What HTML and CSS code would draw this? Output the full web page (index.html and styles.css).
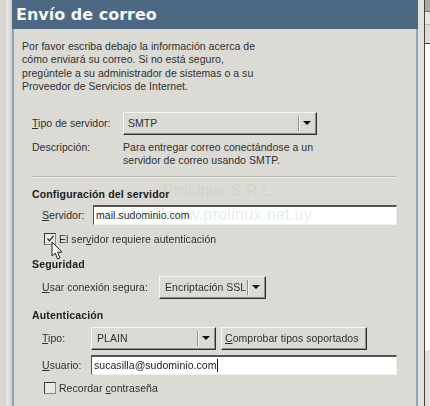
FILE: index.html
```html
<!DOCTYPE html>
<html lang="es">
<head>
<meta charset="utf-8">
<title>Envío de correo</title>
<link rel="stylesheet" href="styles.css">
</head>
<body>
<div class="window">
  <div class="frame">
    <main class="panel">
      <h1 class="title">Envío de correo</h1>
      <div class="content">
        <p class="intro">Por favor escriba debajo la información acerca de<br>cómo enviará su correo. Si no está seguro,<br>pregúntele a su administrador de sistemas o a su<br>Proveedor de Servicios de Internet.</p>
        <div class="row row-type">
          <span class="label label-wide"><u>T</u>ipo de servidor:</span>
          <div class="combo combo-smtp"><span class="combo-text">SMTP</span><span class="combo-sep"></span><span class="arrow"></span></div>
        </div>
        <div class="row row-desc">
          <span class="label label-wide">Descripción:</span>
          <p class="desc">Para entregar correo conectándose a un<br>servidor de correo usando SMTP.</p>
        </div>
        <div class="rule"></div>
        <h2 class="heading heading-first">Configuración del servidor</h2>
        <div class="row row-server">
          <span class="label label-server"><u>S</u>ervidor:</span>
          <div class="field field-server">mail.sudominio.com</div>
        </div>
        <div class="check check-auth"><span class="box"><svg width="9" height="9" viewBox="0 0 9 9"><path d="M1.5 4.5L3.5 6.8L7.5 1.8" fill="none" stroke="#222" stroke-width="1.2"/></svg></span><span>El ser<u>v</u>idor requiere autenticación</span></div>
        <h2 class="heading heading-sec">Seguridad</h2>
        <div class="row row-secure">
          <span class="label label-secure"><u>U</u>sar conexión segura:</span>
          <div class="combo combo-ssl"><span class="combo-text">Encriptación SSL</span><span class="combo-sep"></span><span class="arrow"></span></div>
        </div>
        <h2 class="heading heading-auth">Autenticación</h2>
        <div class="row row-auth">
          <span class="label label-auth"><u>T</u>ipo:</span>
          <div class="combo combo-plain"><span class="combo-text">PLAIN</span><span class="combo-sep"></span><span class="arrow"></span></div>
          <div class="button"><span><u>C</u>omprobar tipos soportados</span></div>
        </div>
        <div class="row row-user">
          <span class="label label-auth"><u>U</u>suario:</span>
          <div class="field field-user">sucasilla@sudominio.com<span class="caret"></span></div>
        </div>
        <div class="check check-remember"><span class="box"></span><span>Recordar <u>c</u>ontraseña</span></div>
      </div>
    </main>
  </div>
  <aside class="side">
    <div class="side-a"></div>
    <div class="side-b"></div>
    <div class="side-c"></div>
    <div class="side-gap"></div>
    <div class="side-d"></div>
  </aside>
</div>
<div class="mark mark-1">ProLinux S.R.L.</div>
<div class="mark mark-2">http://www.prolinux.net.uy</div>
<svg class="cursor" width="13" height="20" viewBox="0 0 13 20"><path d="M1 1V15L4.2 12L6.6 18L9 17L6.6 11.2H11Z" fill="#fff" stroke="#222" stroke-width="1"/></svg>
</body>
</html>
```
FILE: styles.css
```css
* { box-sizing: border-box; }
html, body { margin: 0; height: 100%; }
body {
  width: 430px;
  height: 406px;
  overflow: hidden;
  position: relative;
  background: #d9d7d1;
  font-family: "Liberation Sans", Arial, sans-serif;
  font-size: 10.5px;
  color: #2f2f2f;
  letter-spacing: 0.04px;
  filter: blur(0.3px);
}
u { text-decoration-thickness: 1px; text-underline-offset: 1px; }
.window { display: flex; height: 406px; }
.frame {
  width: 425px;
  height: 406px;
  padding: 0 6px 0 12px;
  border-right: 1px solid #444;
  background: linear-gradient(90deg, #d8d6d0 0, #d8d6d0 6px, #ecebe7 7px, #d4d2cc 11px, #d4d2cc 12px) left top / 12px 100% no-repeat, #e2e0dc;
}
.panel {
  height: 406px;
  background: #dbdad5;
  border-left: 2px solid #8fa3b6;
  border-right: 2px solid #8fa3b6;
}
.title {
  margin: 0 -2px;
  height: 29px;
  padding: 3px 0 0 4px;
  background: #4d6883;
  color: #f4f6f7;
  font-family: "DejaVu Sans", sans-serif;
  font-size: 16px;
  line-height: 23px;
  font-weight: 700;
  letter-spacing: 0;
}
.content { padding: 11px 20px 0 8px; }
.intro { margin: 0; line-height: 13.4px; }
.row { display: flex; align-items: center; }
.label { flex: none; }
.label-wide { width: 91px; }
.row-type { margin: 18px 0 0 10px; height: 23px; }
.row-desc { margin: 6px 0 0 10px; align-items: flex-start; }
.desc { margin: 0; line-height: 13.6px; }
.rule {
  margin: 8px 0 0 10px;
  height: 2px;
  background: linear-gradient(#b5b4ae 0 1px, #f3f2ee 1px 2px);
}
.heading { margin: 0 0 0 10px; font-size: 10.5px; line-height: 13px; font-weight: 700; color: #1c1c1c; letter-spacing: 0.15px; }
.heading-first { margin-top: 10px; }
.heading-sec { margin-top: 12px; }
.heading-auth { margin-top: 10px; }
.combo {
  flex: none;
  display: flex;
  align-items: center;
  background: #dbdad5;
  border: 1px solid;
  border-color: #f6f6f3 #2e2e2e #2e2e2e #f6f6f3;
  box-shadow: inset -1px -1px 0 #8f8e89;
}
.combo-text { flex: 1; white-space: nowrap; }
.combo-sep { width: 2px; height: 15px; background: linear-gradient(90deg, #8f8e89 0 1px, #f6f6f3 1px 2px); }
.arrow {
  width: 0;
  height: 0;
  margin: 0 5px 0 3px;
  border-left: 4px solid transparent;
  border-right: 4px solid transparent;
  border-top: 4px solid #111;
}
.combo-smtp { width: 194px; height: 23px; padding-left: 4px; }
.combo-ssl { width: 107px; height: 23px; padding-left: 5px; }
.combo-plain { width: 125px; height: 23px; padding-left: 5px; }
.field {
  flex: none;
  display: flex;
  align-items: center;
  background: #fff;
  padding-left: 2px;
  border: 1px solid;
  border-color: #555 #eeeeea #eeeeea #555;
  border-top-width: 2px;
  color: #222;
}
.row-server { margin: 4px 0 0 20px; height: 20px; }
.label-server { width: 51px; }
.field-server { width: 304px; height: 20px; }
.check { display: flex; align-items: center; margin-left: 22px; height: 14px; }
.box {
  flex: none;
  display: flex;
  align-items: center;
  justify-content: center;
  width: 12px;
  height: 12px;
  margin-right: 3px;
  background: #e9e8e4;
  border: 1px solid #3a3a3a;
  border-right-color: #888;
  border-bottom-color: #888;
}
.check-auth { margin-top: 7px; }
.row-secure { margin: 5px 0 0 20px; height: 23px; }
.label-secure { width: 117px; }
.row-auth { margin: 5px 0 0 20px; height: 23px; gap: 5px; }
.label-auth { width: 49px; }
.row-auth .label-auth { margin-right: -5px; }
.button {
  flex: none;
  width: 146px;
  height: 23px;
  display: flex;
  align-items: center;
  padding-left: 3px;
  background: #dbdad5;
  border: 1px solid;
  border-color: #f6f6f3 #2e2e2e #2e2e2e #f6f6f3;
  box-shadow: inset -1px -1px 0 #8f8e89;
}
.row-user { margin: 5px 0 0 20px; height: 20px; }
.field-user { width: 306px; height: 20px; }
.caret { width: 1px; height: 13px; background: #111; margin-left: 1px; }
.check-remember { margin-top: 6px; }
.side { flex: none; width: 5px; height: 406px; background: #fff; display: flex; flex-direction: column; }
.side-a { height: 12px; background: #a9a8a4; border-bottom: 1px solid #777; }
.side-b { height: 13px; background: #e8e7e3; border-bottom: 1px solid #b5b4ae; }
.side-c { height: 19px; background: #dbdad5; border-bottom: 1px solid #444; }
.side-gap { flex: 1; }
.side-d { height: 56px; background: #e2e1dc; border-top: 1px solid #eeeeea; }
.mark {
  position: absolute;
  color: rgba(165, 215, 165, 0.32);
  font-family: "Liberation Sans", sans-serif;
  white-space: nowrap;
  font-size: 16px;
  line-height: 20px;
}
.mark-1 { left: 163px; top: 181px; letter-spacing: 0; }
.mark-2 { left: 122px; top: 205px; letter-spacing: 0.3px; }
.cursor { position: absolute; left: 51px; top: 241px; }
```
